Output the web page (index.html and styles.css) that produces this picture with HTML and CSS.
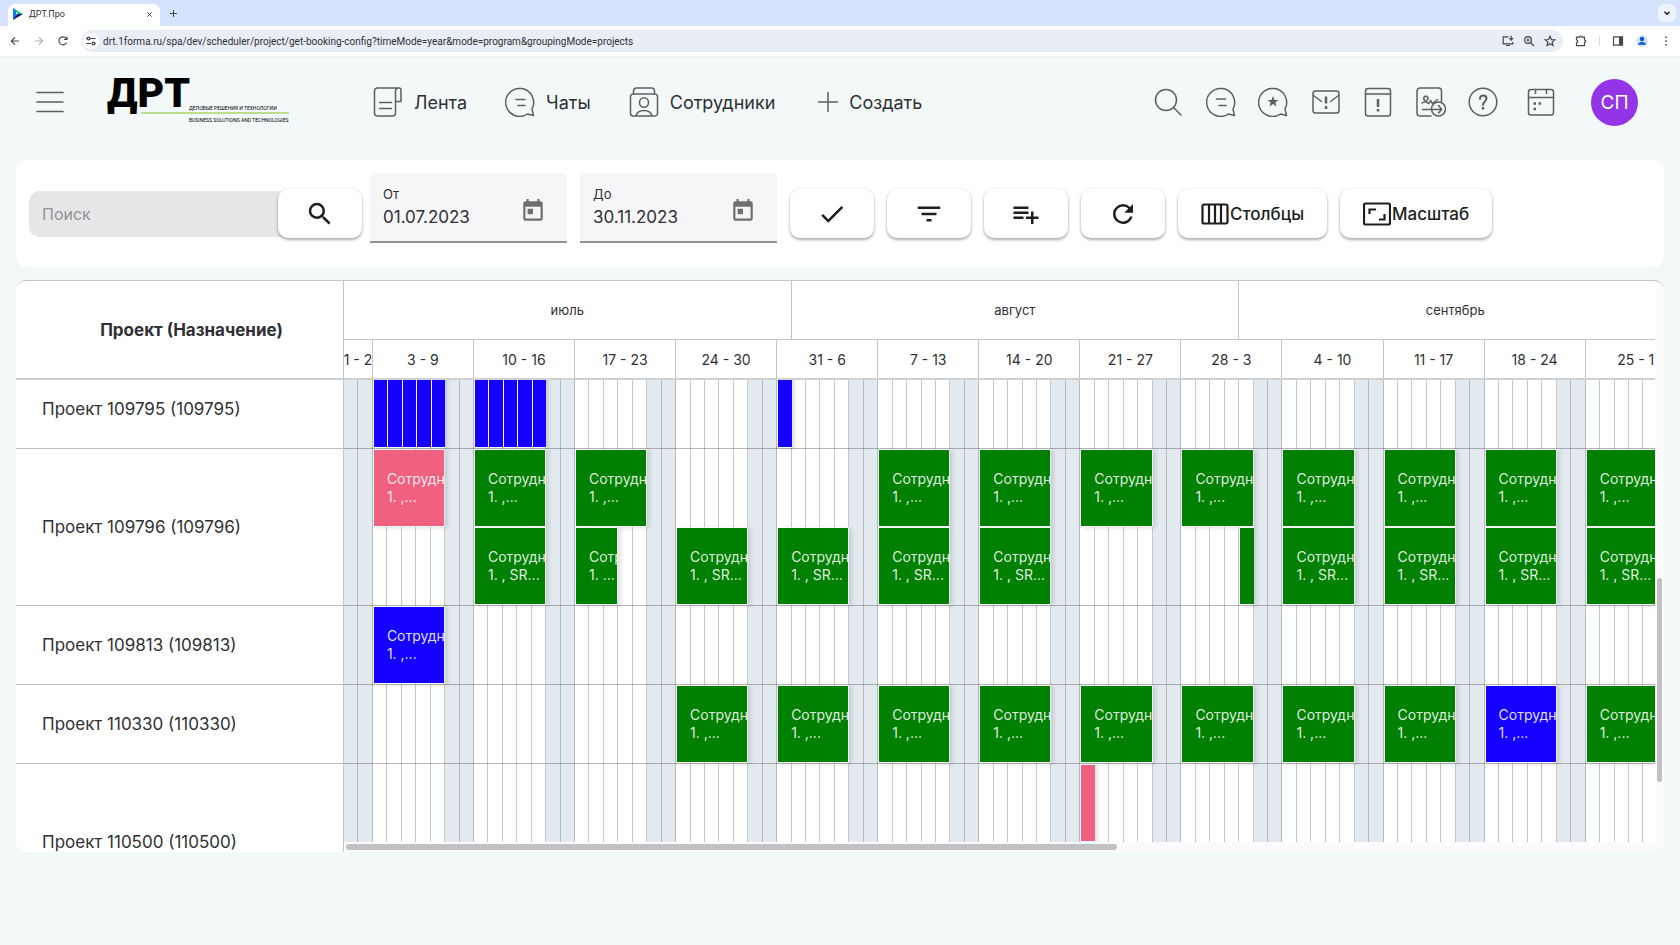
FILE: index.html
```html
<!DOCTYPE html>
<html lang="ru">
<head>
<meta charset="utf-8">
<title>ДРТ.Про</title>
<link rel="stylesheet" href="styles.css">
</head>
<body>
<div class="tabstrip">
  <div class="tab">
    <svg class="favicon" viewBox="0 0 10 12"><path fill="#0b7cf5" d="M0 0v12l3-3V2z"/><path fill="#10c58b" d="M0 0l10 6-5 0z"/><path fill="#101a6b" d="M0 12l10-6H4z"/></svg>
    <span class="tab-title">ДРТ.Про</span>
    <button class="tab-btn" aria-label="Закрыть вкладку"><svg viewBox="0 0 8 8"><path d="M1.500 1.500l5 5m0-5l-5 5"/></svg></button>
  </div>
  <button class="tab-btn tab-new" aria-label="Новая вкладка"><svg viewBox="0 0 8 8"><path d="M4 0v8M0 4h8"/></svg></button>
  <button class="tab-menu" aria-label="Поиск вкладок"><svg viewBox="0 0 8 8"><path d="M2 3l2 2 2-2"/></svg></button>
</div>
<div class="browserbar">
  <button class="bb" aria-label="Назад"><svg viewBox="0 0 12 12"><path d="M10 6H2.500M6 2.300L2.300 6 6 9.700"/></svg></button>
  <button class="bb dim" aria-label="Вперёд"><svg viewBox="0 0 12 12"><path d="M2 6h7.500M6 2.300L9.700 6 6 9.700"/></svg></button>
  <button class="bb" aria-label="Обновить"><svg viewBox="0 0 12 12"><path d="M9.500 7.500A4 4 0 1 1 9 3.300L10 4.500M10 1.500v3H7"/></svg></button>
  <div class="omnibox">
    <span class="site"><svg viewBox="0 0 12 12"><path d="M1 3.500h1M5 3.500h5.500M1 8.500h5M10 8.500h1"/><circle cx="3.500" cy="3.500" r="1.400"/><circle cx="8.500" cy="8.500" r="1.400"/></svg></span>
    <input class="url" aria-label="Адрес" value="drt.1forma.ru/spa/dev/scheduler/project/get-booking-config?timeMode=year&amp;mode=program&amp;groupingMode=projects">
    <button class="bb" aria-label="Установить"><svg viewBox="0 0 12 12"><path d="M6.500 1.800H1.200v7h9.600V7M4 10.500h4M9.200 0.800v4M7.300 3.200l1.900 1.900 1.900-1.900"/></svg></button>
    <button class="bb" aria-label="Масштаб страницы"><svg viewBox="0 0 12 12"><circle cx="5" cy="5" r="3.400"/><path d="M7.500 7.500L11 11M5 3.500v3M3.500 5h3"/></svg></button>
    <button class="bb" aria-label="В закладки"><svg viewBox="0 0 12 12"><path d="M6 1.300l1.400 3.200 3.400.3-2.600 2.300.8 3.400L6 8.700l-3 1.800.8-3.400L1.200 4.800l3.400-.3z"/></svg></button>
  </div>
  <button class="bb" aria-label="Расширения"><svg viewBox="0 0 12 12"><path d="M1.500 2.200H4.500a1.200 1.200 0 0 1 2.400 0H9.500v3a1.200 1.200 0 0 1 0 2.400v3h-8v-3a1.300 1.300 0 0 0 0-2.600z"/></svg></button>
  <span class="bar-sep"></span>
  <button class="bb" aria-label="Боковая панель"><svg viewBox="0 0 12 12"><path d="M1.500 1.800h9v8.400h-9z"/><path class="solid" d="M7 2h3.500v8H7z"/></svg></button>
  <button class="bb profile" aria-label="Профиль"><svg viewBox="0 0 12 12"><circle cx="6" cy="4" r="2.200"/><path d="M2 9.800c0-2 1.800-2.900 4-2.900s4 .9 4 2.900z"/></svg></button>
  <button class="bb" aria-label="Меню браузера"><svg viewBox="0 0 12 12"><path class="solid" d="M5.200 1.400h1.600v1.600H5.200zM5.200 5.200h1.600v1.600H5.200zM5.200 9h1.600v1.600H5.200z"/></svg></button>
</div>

<header class="header">
  <button class="burger" aria-label="Меню"><svg viewBox="0 0 28 24"><path d="M1 2.500h26M1 12h26M1 21.500h26"/></svg></button>
  <a class="logo" href="#">
    <span class="logo-mark">ДРТ</span>
    <span class="logo-sub">ДЕЛОВЫЕ РЕШЕНИЯ И ТЕХНОЛОГИИ</span>
    <span class="logo-line"></span>
    <span class="logo-sub">BUSINESS SOLUTIONS AND TECHNOLOGIES</span>
  </a>
  <nav class="nav">
    <a href="#"><svg viewBox="0 0 30 30"><path d="M4.500 1h21.500a2 2 0 0 1 2 2v11.500h-5.500M4.500 1A3 3 0 0 0 1.500 4v22a3 3 0 0 0 3 3h15a3 3 0 0 0 3-3V4a3 3 0 0 1 2.500-3M6.500 15.500h12M6.500 21.500h12"/></svg>Лента</a>
    <a href="#"><svg viewBox="0 0 30 30"><path d="M28.500 28.500l-6-1.500A14 14 0 1 1 27 22zM11 12.500h9M13 18.500h7"/></svg>Чаты</a>
    <a href="#"><svg viewBox="0 0 30 30"><path d="M4.500 7V4a3 3 0 0 1 3-3h15a3 3 0 0 1 3 3v3M4 7h22a2.500 2.500 0 0 1 2.500 2.500v17A2.500 2.500 0 0 1 26 29H4a2.500 2.500 0 0 1-2.500-2.500v-17A2.500 2.500 0 0 1 4 7zM7 29c1-4.500 4.500-5.500 8-5.500s7 1 8 5.500"/><ellipse cx="15" cy="15.500" rx="4.500" ry="4.800"/></svg>Сотрудники</a>
    <button><svg viewBox="0 0 30 30"><path d="M15 5.500v19M5.500 15h19"/></svg>Создать</button>
  </nav>
  <div class="tools">
    <button aria-label="Поиск"><svg viewBox="0 0 30 30"><circle cx="13" cy="13" r="10.500"/><path d="M20.500 20.500l7.500 7.500"/></svg></button>
    <button aria-label="Чат"><svg viewBox="0 0 30 30"><path d="M28.500 28.500l-6-1.500A14 14 0 1 1 27 22zM10.500 12h9M13 18.500h7"/></svg></button>
    <button aria-label="Избранное"><svg viewBox="0 0 30 30"><path d="M28.500 28.500l-6-1.500A14 14 0 1 1 27 22z"/><path class="star" d="M15 9l1.500 4h4l-3.200 2.500 1.200 4L15 17l-3.500 2.500 1.200-4L9.500 13h4z"/></svg></button>
    <button aria-label="Важные письма"><svg viewBox="0 0 30 30"><rect x="2" y="4" width="26" height="22" rx="2.500"/><path d="M2.500 8.500l8 6M27.500 8.500l-8 6"/><path class="bold" d="M15 9.500v7M15 19v3"/></svg></button>
    <button aria-label="Важные задачи"><svg viewBox="0 0 30 30"><rect x="2.500" y="1.500" width="25" height="27.500" rx="2.500"/><path d="M2.500 7h25"/><path class="bold" d="M15 12v8M15 22v2.500"/></svg></button>
    <button aria-label="На подпись"><svg viewBox="0 0 30 30"><path d="M15 29H4a3 3 0 0 1-3-3V4a3 3 0 0 1 3-3h18.500a3 3 0 0 1 3 3v11M6.500 22.500h18M6 16c5-1 7.500-5 5-6.500s-5 2-1.500 5l3.500 2 1.500-3 2 3 5-4"/><circle cx="22.500" cy="22" r="7"/><path d="M22.500 18.500l3.200 3.700-3.200 3.700"/></svg></button>
    <button aria-label="Помощь"><svg viewBox="0 0 30 30"><circle cx="15" cy="15" r="13.800"/><path d="M12 12c0-5 6.500-4.500 6.500-.5 0 3-3.500 3-3.500 6.500" class="mid"/><path class="bold" d="M15 20v2.500"/></svg></button>
  </div>
  <button class="calendar" aria-label="Календарь"><svg viewBox="0 0 30 30"><rect x="2.500" y="2.500" width="25" height="25.500" rx="2.500"/><path d="M2.500 10.500h25M9.500 2.500v4M20.500 2.500v4"/><path class="bold" d="M7.500 16.500h2.500M12.500 16.500h2.500M7.500 22h2.500"/></svg></button>
  <button class="avatar">СП</button>
</header>

<section class="toolbar">
  <div class="search">
    <input type="text" placeholder="Поиск" aria-label="Поиск">
    <button class="btn" aria-label="Найти"><svg viewBox="0 0 24 24"><path d="M15.500 14h-.79l-.28-.27A6.470 6.470 0 0 0 16 9.500 6.500 6.500 0 1 0 9.500 16c1.610 0 3.090-.59 4.230-1.570l.27.28v.79l5 4.990L20.490 19l-4.990-5zm-6 0a4.500 4.500 0 1 1 0-9 4.500 4.500 0 0 1 0 9z"/></svg></button>
  </div>
  <div class="date">
    <div class="date-text"><label for="from">От</label><input id="from" type="text" value="01.07.2023"></div>
    <button aria-label="Выбрать дату начала"><svg viewBox="0 0 24 24"><path d="M19 3h-1V1h-2v2H8V1H6v2H5a2 2 0 0 0-2 2v14a2 2 0 0 0 2 2h14a2 2 0 0 0 2-2V5a2 2 0 0 0-2-2zm0 16H5V8h14v11zM7 10h5v5H7z"/></svg></button>
  </div>
  <div class="date">
    <div class="date-text"><label for="to">До</label><input id="to" type="text" value="30.11.2023"></div>
    <button aria-label="Выбрать дату окончания"><svg viewBox="0 0 24 24"><path d="M19 3h-1V1h-2v2H8V1H6v2H5a2 2 0 0 0-2 2v14a2 2 0 0 0 2 2h14a2 2 0 0 0 2-2V5a2 2 0 0 0-2-2zm0 16H5V8h14v11zM7 10h5v5H7z"/></svg></button>
  </div>
  <button class="btn" aria-label="Применить"><svg viewBox="0 0 24 24"><path d="M9 16.170L4.830 12l-1.420 1.410L9 19 21 7l-1.410-1.410z"/></svg></button>
  <button class="btn" aria-label="Фильтр"><svg viewBox="0 0 24 24"><path d="M10 18h4v-2h-4v2zM3 6v2h18V6H3zm3 7h12v-2H6v2z"/></svg></button>
  <button class="btn" aria-label="Добавить в список"><svg viewBox="0 0 24 24"><path d="M14 10H2v2h12v-2zm0-4H2v2h12V6zm4 8v-4h-2v4h-4v2h4v4h2v-4h4v-2h-4zM2 16h8v-2H2v2z"/></svg></button>
  <button class="btn" aria-label="Обновить график"><svg viewBox="0 0 24 24"><path d="M17.650 6.350A7.960 7.960 0 0 0 12 4a8 8 0 1 0 7.730 10h-2.080A6 6 0 1 1 12 6c1.660 0 3.140.69 4.220 1.780L13 11h7V4l-2.350 2.350z"/></svg></button>
  <button class="btn wide"><svg viewBox="0 0 28 24"><path class="line" d="M3 2.500h22a1.500 1.500 0 0 1 1.500 1.500v16a1.500 1.500 0 0 1-1.500 1.500H3A1.500 1.500 0 0 1 1.500 20V4A1.500 1.500 0 0 1 3 2.500zM8 2.500v19M14 2.500v19M20 2.500v19"/></svg>Столбцы</button>
  <button class="btn wide"><svg viewBox="0 0 28 24"><path class="line" d="M2.500 1.500h23a1.500 1.500 0 0 1 1.500 1.500v18a1.500 1.500 0 0 1-1.500 1.500h-23A1.500 1.500 0 0 1 1 21V3a1.500 1.500 0 0 1 1.500-1.500zM6.500 12V7.500H13M21.500 12v5.500H16"/></svg>Масштаб</button>
</section>

<main class="scheduler">
  <div class="projects">
    <div class="projects-head">Проект (Назначение)</div>
    <div class="viewport"><div class="scrolled" id="projects"></div></div>
  </div>
  <div class="timeline">
    <div class="months days-grid" id="months"></div>
    <div class="weeks days-grid" id="weeks"></div>
    <div class="viewport">
      <div class="days days-grid" id="days"></div>
      <div class="scrolled rows" id="rows"></div>
    </div>
    <div class="hscroll"><div class="hthumb"></div></div>
  </div>
  <div class="vscroll"><div class="vthumb"></div></div>
</main>
<script src="app.js"></script>
</body>
</html>
```
FILE: styles.css
```css
* { box-sizing: border-box; }
body {
  margin: 0;
  min-height: 100vh;
  background: #f3f8f9;
  color: #2f3033;
  font-family: Inter, "Noto Sans", sans-serif;
  display: flex;
  flex-direction: column;
}
button { border: 0; padding: 0; background: none; color: inherit; font: inherit; }
input { border: 0; padding: 0; min-width: 0; background: none; color: inherit; font: inherit; outline: 0; }
a { color: inherit; text-decoration: none; }
svg { display: block; flex: none; }

/* Browser chrome */
.tabstrip {
  height: 26px;
  padding: 4px 4px 0 8px;
  background: #d5e3ff;
  display: flex;
  align-items: flex-start;
}
.tab {
  width: 152px;
  height: 22px;
  padding: 0 3px 2px 5px;
  border-radius: 7px 7px 0 0;
  background: #fff;
  display: flex;
  align-items: center;
}
.favicon { width: 10px; height: 12px; }
.tab-title { flex: 1; margin-left: 6px; font: 9px Roboto, sans-serif; }
.tab-btn { width: 16px; height: 16px; display: grid; place-items: center; }
.tab-btn svg { width: 7px; height: 7px; fill: none; stroke: #333; stroke-width: 1; }
.tab-new { margin-left: 5px; margin-top: 1px; }
.tab-menu { width: 18px; height: 18px; margin-left: auto; border-radius: 6px; background: #edf3ff; display: grid; place-items: center; }
.tab-menu svg { width: 10px; height: 10px; fill: none; stroke: #222; stroke-width: 1.200; }
.browserbar {
  height: 31px;
  padding: 0 8px 0 9px;
  background: #fff;
  border-bottom: 1px solid #eef1f1;
  display: flex;
  align-items: center;
  gap: 12px;
}
.bb { width: 12px; height: 12px; }
.bb svg, .site svg { width: 12px; height: 12px; fill: none; stroke: #45474a; stroke-width: 1.200; }
.bb.dim svg { stroke: #b3b5b8; }
.bb .solid { fill: #45474a; stroke: none; }
.omnibox {
  flex: 1;
  height: 22px;
  padding: 0 7px 0 2px;
  border-radius: 11px;
  background: #e9edf6;
  display: flex;
  align-items: center;
  gap: 9px;
}
.site { width: 16px; height: 16px; border-radius: 8px; background: #fff; display: grid; place-items: center; }
.url { flex: 1; font: 10px Roboto, sans-serif; margin-left: -5px; }
.bar-sep { width: 1px; height: 10px; background: #c9dcfb; }
.profile { border-radius: 6px; background: #d5e3ff; }
.profile svg { fill: #0b57d0; stroke: none; }

/* Header */
.header {
  height: 90px;
  padding: 0 42px 0 36px;
  display: flex;
  align-items: center;
}
.burger svg { width: 28px; height: 24px; }
.header svg { fill: none; stroke: #5d5f61; stroke-width: 1.500; stroke-linecap: round; stroke-linejoin: round; }
.header .star { fill: #5d5f61; stroke-width: 0; }
.header .bold { stroke-width: 2.500; stroke-linecap: butt; }
.header .mid { stroke-width: 2; }
.logo { width: 179px; height: 54px; margin-left: 43px; display: grid; grid-template-columns: 34px 48px 1fr; grid-template-rows: 36px 4px 10px; color: #000; }
.logo-mark { grid-area: 1 / 1 / 3 / 4; font: 900 41px/36px Roboto, sans-serif; }
.logo-sub { grid-column: 3; font: 5px/6px Roboto, sans-serif; white-space: nowrap; z-index: 1; }
.logo-sub:nth-child(2) { grid-row: 1; align-self: end; }
.logo-sub:nth-child(4) { grid-row: 3; align-self: center; }
.logo-line { grid-area: 2 / 2 / 3 / 4; align-self: center; height: 2px; background: #b9de8e; }
.nav { margin-left: 87px; display: flex; align-items: center; gap: 38px; font-size: 18px; }
.nav a, .nav button { display: flex; align-items: center; gap: 11px; }
.nav svg, .tools svg { width: 30px; height: 30px; }
.nav button { gap: 6px; }
.header { margin-bottom: -1px; }
.tools { width: 345px; margin-left: auto; display: flex; justify-content: space-between; }
.calendar { margin-left: 28px; }
.calendar svg { width: 30px; height: 30px; }
.avatar { width: 47px; height: 47px; margin-left: 35px; border-radius: 50%; background: #9334e6; color: #fff; font-size: 19px; }

/* Toolbar */
.toolbar {
  margin: 14px 16px 13px;
  padding: 13px;
  background: #fff;
  border-radius: 10px;
  display: flex;
  align-items: center;
  gap: 13px;
  height: 107px;
}
.search { display: flex; align-items: center; margin-right: -5px; }
.search input {
  width: 260px;
  height: 46px;
  padding-left: 13px;
  margin-right: -11px;
  border-radius: 10px 0 0 10px;
  background: #e6e6e8;
  font-size: 16px;
}
.search input::placeholder { color: #929396; opacity: 1; }
.btn {
  width: 84px;
  height: 49px;
  border-radius: 10px;
  background: #fff;
  box-shadow: 0 2px 3px rgba(0, 0, 0, .3), 0 0 3px rgba(0, 0, 0, .1);
  color: #1d1e20;
  display: flex;
  align-items: center;
  justify-content: center;
}
.btn svg { width: 32px; height: 30px; fill: #1d1e20; }
.btn.wide { width: auto; padding: 0 23px; gap: 1px; font-size: 17px; font-weight: 500; }
.btn.wide svg { width: 28px; height: 24px; }
.btn .line { fill: none; stroke: #1d1e20; stroke-width: 2.200; }
.date {
  width: 197px;
  height: 70px;
  padding: 8px 21px 0 13px;
  margin-bottom: 12px;
  border-bottom: 2px solid #929396;
  border-radius: 5px 5px 0 0;
  background: #f6f6f8;
  display: flex;
  align-items: center;
}
.date-text { flex: 1; display: flex; flex-direction: column; margin-bottom: 8px; }
.date-text label { font-size: 13px; line-height: 20px; }
.date-text input { width: 120px; height: 26px; font-size: 17px; }
.date svg { width: 26px; height: 26px; fill: #6d6e70; }

/* Scheduler */
.scheduler {
  height: 572px;
  margin: 0 16px;
  border-top: 1px solid #c2c6c8;
  border-radius: 10px;
  background: #fbfbfd;
  overflow: hidden;
  display: grid;
  grid-template-columns: 328px 1fr 9px;
}
.projects, .timeline { min-width: 0; min-height: 0; display: flex; flex-direction: column; background: #fff; }
.projects { border-right: 1px solid #c2c6c8; }
.projects-head {
  height: 99px;
  flex: none;
  padding-left: 24px;
  border-bottom: 2px solid #cfd1d3;
  font-size: 17px;
  font-weight: 700;
  display: grid;
  place-items: center;
}
.viewport { flex: 1; min-height: 0; overflow: hidden; display: grid; grid-template-columns: 100%; }
.scrolled { margin-top: -10px; }
.project {
  padding-left: 26px;
  border-bottom: 1px solid #bcbfc2;
  font-size: 17px;
  display: flex;
  align-items: center;
}
.project.lane1, .row.lane1 { height: 79px; }
.project.lane2, .row.lane2 { height: 157px; }
.timeline { overflow: hidden; }
.days-grid, .lanes { width: 2209px; display: grid; grid-template-columns: repeat(153, minmax(0, 1fr)); }
.months { height: 59px; flex: none; font-size: 13px; border-bottom: 1px solid #c2c6c8; }
.weeks { height: 40px; flex: none; font-size: 14px; border-bottom: 2px solid #cfd1d3; }
.months span, .weeks span { border-right: 1px solid #c2c6c8; display: flex; align-items: center; justify-content: center; white-space: nowrap; }
.days, .rows { grid-area: 1 / 1; }
.days span { border-right: 1px solid #c6c9ca; }
.days .weekend { background: #e2eaf0; border-right-color: #b4babf; }
.row { border-bottom: 1px solid rgba(90, 95, 100, .45); width: 2209px; }
.lanes { height: 100%; grid-auto-rows: 78px; }
.bar {
  padding: 20px 0 0 13px;
  border: 1px solid rgba(255, 255, 255, .75);
  background-clip: padding-box;
  box-shadow: 3px 1px 4px rgba(0, 0, 0, .12);
  color: rgba(255, 255, 255, .88);
  font-size: 14px;
  line-height: 18px;
  overflow: hidden;
}
.bar b { display: block; font-weight: 400; white-space: nowrap; }
.bar.green { background-color: #008000; }
.bar.blue { background-color: #1500ff; }
.bar.pink { background-color: #f06080; }
.bar.thin { padding: 0; border-right: 0; }
.hscroll { height: 10px; flex: none; background: #fbfbfd; display: flex; align-items: center; padding: 0 2px; }
.hthumb { width: 59%; height: 6px; border-radius: 3px; background: #c1c1c3; }
.vscroll { padding: 297px 2px 0; }
.vthumb { height: 204px; border-radius: 3px; background: #c1c1c3; }
```
FILE: app.js
```js
// The range is 1 July (day 1, a Saturday) to 30 November 2023, 153 days.
const TOTAL_DAYS = 153;
const months = [['июль', 31], ['август', 31], ['сентябрь', 30], ['октябрь', 31], ['ноябрь', 30]];

function add(parent, tag, className, text) {
  const el = document.createElement(tag);
  if (className) el.className = className;
  if (text) el.textContent = text;
  parent.append(el);
  return el;
}
const byId = (id) => document.getElementById(id);

const dates = [];
months.forEach(([name, length]) => {
  add(byId('months'), 'span', '', name).style.gridColumn = `span ${length}`;
  for (let d = 1; d <= length; d++) dates.push(d);
});

for (let i = 0; i < TOTAL_DAYS;) {
  const length = i === 0 ? 2 : Math.min(7, TOTAL_DAYS - i);
  const label = `${dates[i]} - ${dates[i + length - 1]}`;
  add(byId('weeks'), 'span', '', label).style.gridColumn = `span ${length}`;
  i += length;
}
dates.forEach((_, i) => add(byId('days'), 'span', i % 7 < 2 ? 'weekend' : ''));

// A bar is [first day, length, colour, lane, second text line].
const week = (n, colour, lane, text = '1. ,...') => [3 + 7 * n, 5, colour, lane, text];
const weeks = (list, colour, lane, text) => list.map((n) => week(n, colour, lane, text));
const singles = (start, count, colour) => Array.from({ length: count }, (_, i) => [start + i, 1, colour, 1]);

const projects = [
  { id: 109795, lanes: 1, bars: [...singles(3, 5, 'blue'), ...singles(10, 5, 'blue'), ...singles(31, 1, 'blue')] },
  { id: 109796, lanes: 2, bars: [
    week(0, 'pink', 1),
    ...weeks([1, 2, 5, 6, 7, 8, 9, 10, 11, 12], 'green', 1),
    ...weeks([1, 3, 4, 5, 6, 9, 10, 11, 12], 'green', 2, '1. , SR...'),
    [17, 3, 'green', 2, '1. ...'],
    [63, 1, 'green', 2],
  ] },
  { id: 109813, lanes: 1, bars: [week(0, 'blue', 1)] },
  { id: 110330, lanes: 1, bars: [...weeks([3, 4, 5, 6, 7, 8, 9, 10, 12], 'green', 1), week(11, 'blue', 1)] },
  { id: 110500, lanes: 2, bars: [[52, 1, 'pink', 1]] },
];

projects.forEach(({ id, lanes, bars }) => {
  add(byId('projects'), 'div', `project lane${lanes}`, `Проект ${id} (${id})`);
  const row = add(byId('rows'), 'div', `row lane${lanes}`);
  const grid = add(row, 'div', 'lanes');
  bars.forEach(([start, length, colour, lane, text]) => {
    const bar = add(grid, 'div', `bar ${colour}${text ? '' : ' thin'}`);
    bar.style.gridArea = `${lane} / ${start} / auto / span ${length}`;
    if (text) {
      add(bar, 'b', '', 'Сотрудник');
      add(bar, 'b', '', text);
    }
  });
});
```
